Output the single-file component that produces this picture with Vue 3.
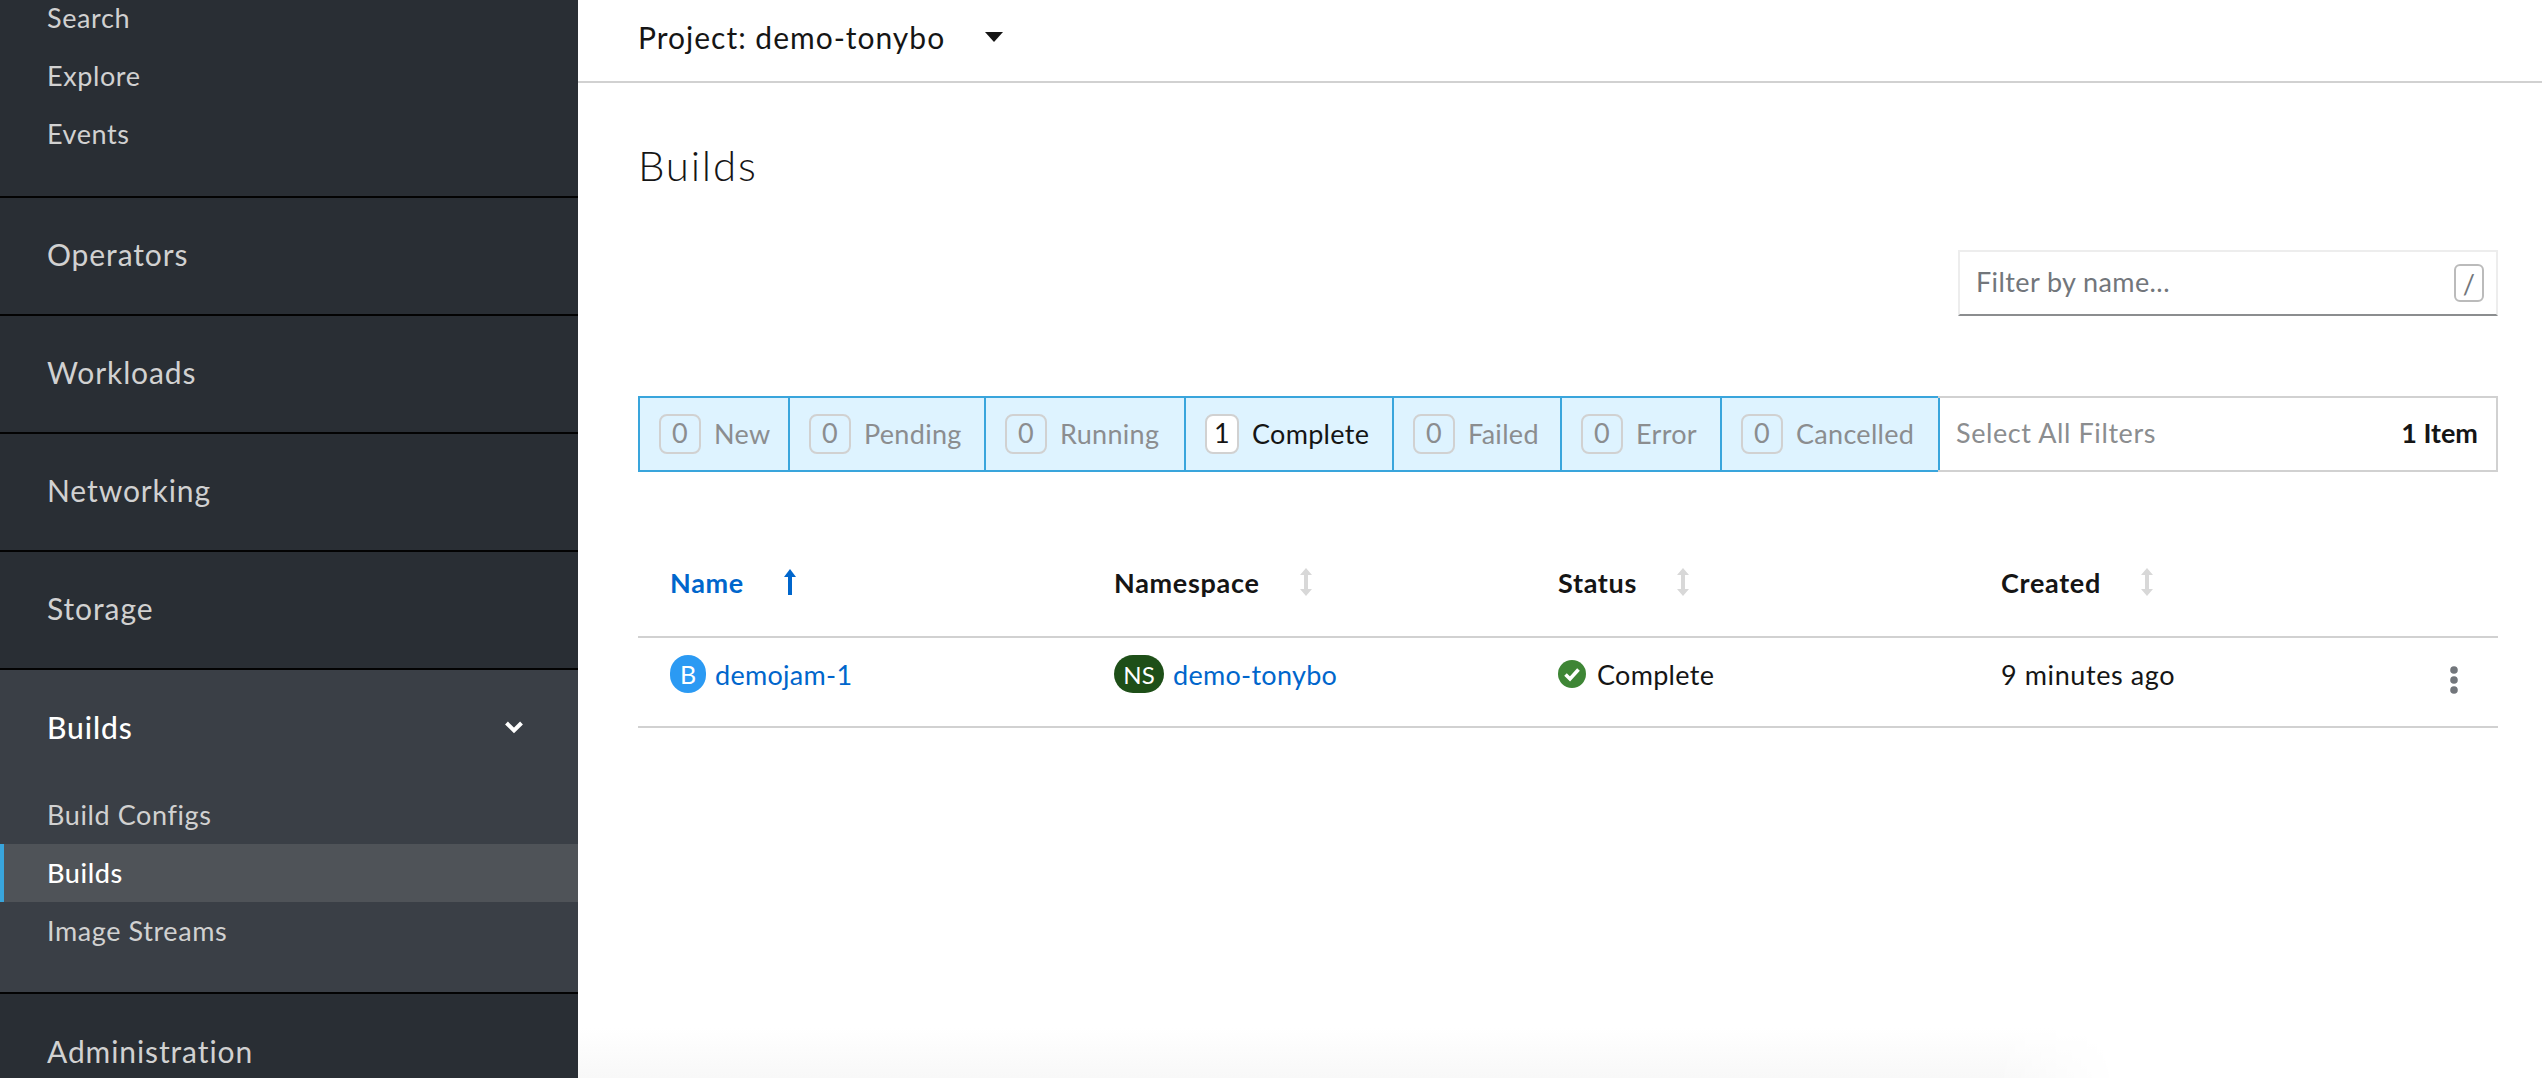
<script setup>
const topItems = ['Search', 'Explore', 'Events']
const sections = ['Operators', 'Workloads', 'Networking', 'Storage']
const buildItems = [
  { name: 'Build Configs' },
  { name: 'Builds', active: true },
  { name: 'Image Streams' },
]

const filters = [
  { label: 'New', count: 0, width: 152 },
  { label: 'Pending', count: 0, width: 198 },
  { label: 'Running', count: 0, width: 202 },
  { label: 'Complete', count: 1, width: 210, on: true },
  { label: 'Failed', count: 0, width: 170 },
  { label: 'Error', count: 0, width: 162 },
  { label: 'Cancelled', count: 0, width: 220 },
]

const columns = [
  { label: 'Name', sorted: true },
  { label: 'Namespace' },
  { label: 'Status' },
  { label: 'Created' },
]
</script>

<template>
  <div class="page">
    <aside class="sidebar">
      <ul class="sub-list sub-list--top">
        <li v-for="item in topItems" :key="item" class="sub-item">{{ item }}</li>
      </ul>
      <div v-for="name in sections" :key="name" class="section">{{ name }}</div>
      <div class="group">
        <div class="section section--open">
          <span>Builds</span>
          <svg class="chevron" viewBox="0 0 20 14" width="20" height="14">
            <path d="M2.5 3 L10 10.5 L17.5 3" fill="none" stroke="#fff" stroke-width="4" />
          </svg>
        </div>
        <ul class="sub-list">
          <li
            v-for="item in buildItems"
            :key="item.name"
            class="sub-item"
            :class="{ 'sub-item--active': item.active }"
          >
            {{ item.name }}
          </li>
        </ul>
      </div>
      <div class="section">Administration</div>
    </aside>

    <main class="main">
      <header class="topbar">
        <span>Project: demo-tonybo</span>
        <svg class="caret" viewBox="0 0 18 10" width="18" height="10">
          <path d="M0 0 H18 L9 10 Z" fill="#151515" />
        </svg>
      </header>

      <div class="content">
        <h1 class="title">Builds</h1>

        <div class="search-row">
          <div class="search">
            <span>Filter by name...</span>
            <kbd class="search__key">/</kbd>
          </div>
        </div>

        <div class="filters">
          <div
            v-for="f in filters"
            :key="f.label"
            class="filter"
            :class="{ 'filter--on': f.on }"
            :style="{ width: f.width + 'px' }"
          >
            <span class="filter__count">{{ f.count }}</span>
            <span>{{ f.label }}</span>
          </div>
          <div class="filters__rest">
            <span>Select All Filters</span>
            <strong>1 Item</strong>
          </div>
        </div>

        <div class="row row--head">
          <div
            v-for="col in columns"
            :key="col.label"
            class="head-cell"
            :class="{ 'head-cell--sorted': col.sorted }"
          >
            <span>{{ col.label }}</span>
            <svg v-if="col.sorted" viewBox="0 0 12 26" width="12" height="26">
              <path d="M6 0 L12 8 H8 V26 H4 V8 H0 Z" fill="#06c" />
            </svg>
            <svg v-else viewBox="0 0 12 28" width="12" height="28">
              <path d="M6 0 L12 7 H8 V21 H12 L6 28 L0 21 H4 V7 H0 Z" fill="#d8d8d8" />
            </svg>
          </div>
        </div>

        <div class="row row--body">
          <div class="cell">
            <span class="badge badge--build">B</span>
            <a class="link">demojam-1</a>
          </div>
          <div class="cell">
            <span class="badge badge--ns">NS</span>
            <a class="link">demo-tonybo</a>
          </div>
          <div class="cell">
            <svg class="check" viewBox="0 0 28 28" width="28" height="28">
              <circle cx="14" cy="14" r="14" fill="#3e8635" />
              <path d="M7.5 14.5 L12 19 L20.5 9.5" fill="none" stroke="#fff" stroke-width="3.6" />
            </svg>
            <span>Complete</span>
          </div>
          <div class="cell cell--last">
            <span class="cell__time">9 minutes ago</span>
            <svg class="kebab" viewBox="0 0 8 28" width="8" height="28">
              <circle cx="4" cy="4" r="3.8" fill="#72767b" />
              <circle cx="4" cy="14" r="3.8" fill="#72767b" />
              <circle cx="4" cy="24" r="3.8" fill="#72767b" />
            </svg>
          </div>
        </div>
      </div>

      <div class="bottom-fade"></div>
    </main>
  </div>
</template>

<style scoped>
.page {
  display: flex;
  height: 1078px;
  overflow: hidden;
  background: #fff;
  color: #151515;
  font-family: Lato, "Liberation Sans", sans-serif;
}

.sidebar {
  flex: 0 0 578px;
  height: 1078px;
  overflow: hidden;
  background: #292e34;
  color: #d1d1d1;
}

.sub-list {
  margin: 0;
  padding: 0 0 32px;
  list-style: none;
}

.sub-list--top {
  margin-top: -11px;
  padding-bottom: 33px;
  border-bottom: 2px solid #030303;
}

.sub-item {
  height: 58px;
  padding-left: 47px;
  font-size: 27px;
  letter-spacing: 0.6px;
  line-height: 58px;
}

.sub-item--active {
  padding-left: 43px;
  border-left: 4px solid #39a5dc;
  background: #4f5358;
  color: #fff;
  font-weight: 500;
}

.section {
  display: flex;
  align-items: center;
  justify-content: space-between;
  box-sizing: border-box;
  height: 118px;
  padding: 0 54px 4px 47px;
  border-bottom: 2px solid #030303;
  font-size: 30px;
  letter-spacing: 0.9px;
}

.section:last-child {
  border-bottom: 0;
}

.group {
  border-bottom: 2px solid #030303;
  background: #3a3f46;
}

.section--open {
  height: 116px;
  padding-bottom: 2px;
  border-bottom: 0;
  color: #fff;
  font-weight: 500;
}

.main {
  position: relative;
  flex: 1;
  min-width: 0;
}

.topbar {
  display: flex;
  align-items: center;
  gap: 40px;
  box-sizing: border-box;
  height: 83px;
  padding-left: 60px;
  padding-bottom: 8px;
  border-bottom: 2px solid #d1d1d1;
  font-size: 30px;
  letter-spacing: 1px;
}

.content {
  padding: 0 44px 0 60px;
}

.title {
  margin: 57px 0 0;
  font-size: 42px;
  font-weight: 300;
  letter-spacing: 1.8px;
  line-height: 50px;
}

.search-row {
  display: flex;
  justify-content: flex-end;
  margin-top: 60px;
}

.search {
  display: flex;
  align-items: center;
  justify-content: space-between;
  box-sizing: border-box;
  width: 540px;
  height: 66px;
  padding: 0 12px 0 16px;
  border: 2px solid #ededed;
  border-bottom-color: #8b8d8f;
  color: #72767b;
  font-size: 27px;
  letter-spacing: 0.4px;
}

.search > span {
  margin-bottom: 3px;
}

.search__key {
  display: flex;
  align-items: center;
  justify-content: center;
  box-sizing: border-box;
  width: 30px;
  height: 38px;
  border: 2px solid #bbb;
  border-radius: 6px;
  font-family: inherit;
  font-size: 27px;
}

.filters {
  display: flex;
  margin-top: 80px;
  height: 76px;
  color: #8b8d8f;
  font-size: 27px;
  letter-spacing: 0.3px;
}

.filter {
  display: flex;
  align-items: center;
  gap: 13px;
  box-sizing: border-box;
  margin-right: -2px;
  padding-left: 19px;
  padding-bottom: 2px;
  border: 2px solid #39a5dc;
  background: #def3ff;
}

.filter__count {
  box-sizing: border-box;
  min-width: 42px;
  height: 40px;
  margin-top: 2px;
  border: 2px solid #d1d1d1;
  border-radius: 8px;
  line-height: 34px;
  text-align: center;
}

.filter--on {
  color: #151515;
}

.filter--on .filter__count {
  min-width: 34px;
  background: #fff;
}

.filters__rest {
  display: flex;
  flex: 1;
  align-items: center;
  justify-content: space-between;
  padding: 0 18px 4px 18px;
  border: 2px solid #d1d1d1;
  border-left: 0;
  letter-spacing: 0.6px;
}

.filters__rest strong {
  color: #151515;
  font-weight: 700;
  letter-spacing: 0;
}

.row {
  display: grid;
  grid-template-columns: 444px 444px 443px 1fr;
  box-sizing: border-box;
  padding-left: 32px;
  border-bottom: 2px solid #d1d1d1;
}

.row--head {
  align-items: center;
  height: 166px;
  padding-top: 56px;
}

.row--body {
  align-items: center;
  height: 90px;
  padding-bottom: 16px;
}

.head-cell {
  display: flex;
  align-items: center;
  gap: 40px;
  font-size: 27px;
  font-weight: 700;
  letter-spacing: 0.7px;
}

.head-cell--sorted {
  color: #06c;
}

.cell {
  display: flex;
  align-items: center;
  gap: 9px;
  font-size: 27px;
  letter-spacing: 0.3px;
}

.cell--last {
  justify-content: space-between;
  padding-right: 40px;
}

.cell__time {
  letter-spacing: 0.6px;
}

.kebab {
  margin-top: 12px;
}

.badge {
  display: flex;
  align-items: center;
  justify-content: center;
  height: 38px;
  border-radius: 19px;
  color: #fff;
  font-size: 25px;
  letter-spacing: 0;
}

.badge--build {
  width: 36px;
  background: #2b9af3;
}

.badge--ns {
  width: 50px;
  background: #1e4f18;
  font-size: 24px;
}

.link {
  color: #06c;
}

.check {
  margin-right: 2px;
}

.bottom-fade {
  position: absolute;
  left: 0;
  bottom: 0;
  width: 1540px;
  height: 50px;
  background: linear-gradient(to bottom, #fff, #f8f8f8);
  -webkit-mask-image: linear-gradient(to right, #000 92%, transparent);
  mask-image: linear-gradient(to right, #000 92%, transparent);
}
</style>

<style>
html,
body {
  margin: 0;
  overflow: hidden;
}
</style>
